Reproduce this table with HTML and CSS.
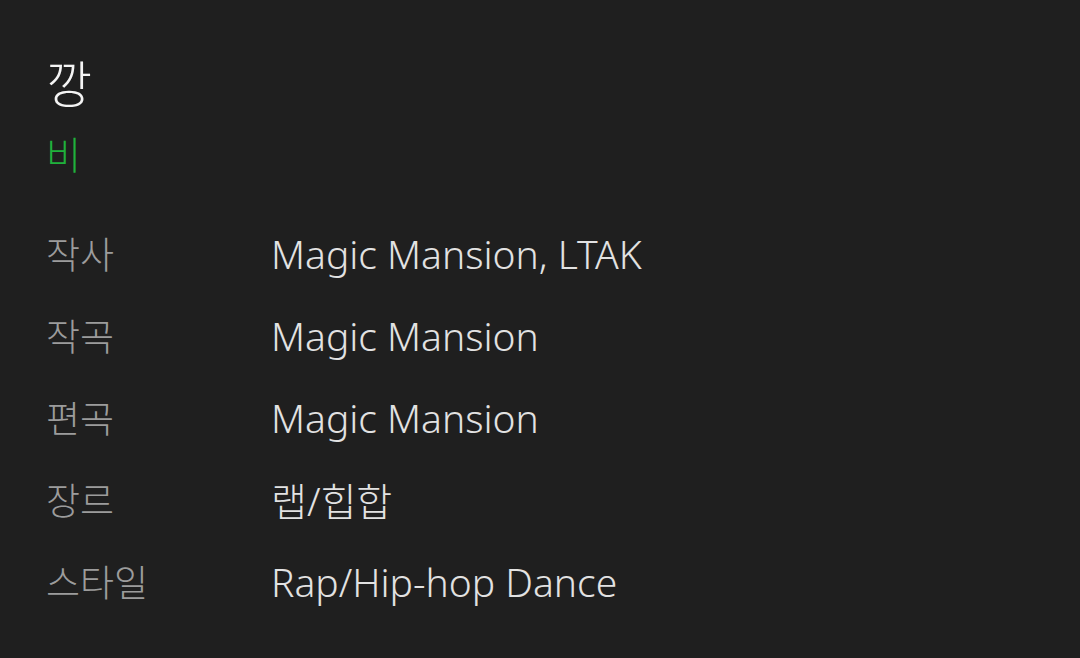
FILE: index.html
```html
<!DOCTYPE html>
<html lang="ko">
<head>
<meta charset="utf-8">
<link rel="stylesheet" href="styles.css">
</head>
<body>
<main class="info">
  <h1 class="title">깡</h1>
  <div class="artist">비</div>
  <dl class="meta">
    <div class="row"><dt>작사</dt><dd>Magic Mansion, LTAK</dd></div>
    <div class="row"><dt>작곡</dt><dd>Magic Mansion</dd></div>
    <div class="row"><dt>편곡</dt><dd>Magic Mansion</dd></div>
    <div class="row"><dt>장르</dt><dd>랩/힙합</dd></div>
    <div class="row"><dt>스타일</dt><dd>Rap/Hip-hop Dance</dd></div>
  </dl>
</main>
</body>
</html>
```
FILE: styles.css
```css
html, body {
  margin: 0;
  padding: 0;
  background: #1f1f1f;
  width: 1080px;
  height: 658px;
  overflow: hidden;
}
body {
  font-family: "Noto Sans", "Noto Sans CJK KR", sans-serif;
  font-weight: 300;
}
.info {
  padding: 50px 0 0 46px;
}
.title {
  margin: 0;
  font-size: 50px;
  font-weight: 300;
  line-height: 68px;
  color: #f4f4f4;
}
.artist {
  margin-top: 6px;
  font-size: 38px;
  line-height: 60px;
  color: #1fb13c;
}
.meta {
  margin: 28px 0 0;
}
.row {
  display: flex;
  align-items: center;
  height: 82px;
}
dt {
  width: 225px;
  flex: none;
  font-size: 37px;
  color: #9c9c9c;
}
dd {
  margin: 0;
  font-size: 39px;
  color: #e2e2e2;
}
```
